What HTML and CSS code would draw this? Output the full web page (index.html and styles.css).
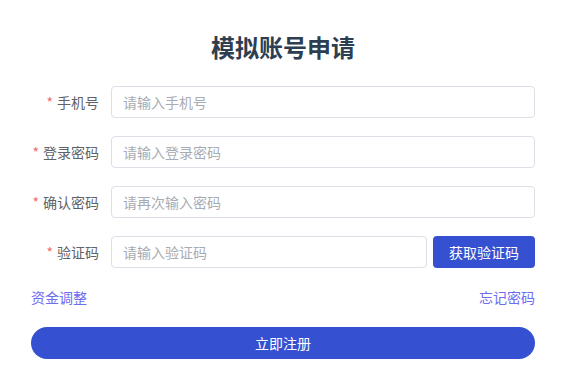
FILE: index.html
```html
<html>
  <head>
    <link rel="stylesheet" href="styles.css">
  </head>
  <body>
    <div class="register">
      <h1 class="title">模拟账号申请</h1>
      <form class="form">
        <div class="form-item">
          <label class="label"><span class="req">*</span>手机号</label>
          <input class="input" type="text" placeholder="请输入手机号">
        </div>
        <div class="form-item">
          <label class="label"><span class="req">*</span>登录密码</label>
          <input class="input" type="password" placeholder="请输入登录密码">
        </div>
        <div class="form-item">
          <label class="label"><span class="req">*</span>确认密码</label>
          <input class="input" type="password" placeholder="请再次输入密码">
        </div>
        <div class="form-item">
          <label class="label"><span class="req">*</span>验证码</label>
          <input class="input" type="text" placeholder="请输入验证码">
          <button class="code-btn" type="button">获取验证码</button>
        </div>
        <div class="links">
          <a class="link" href="#">资金调整</a>
          <a class="link" href="#">忘记密码</a>
        </div>
        <button class="submit" type="button">立即注册</button>
      </form>
    </div>
  </body>
</html>
```

FILE: styles.css
```css
body {
  margin: 0;
  background: #fff;
  font-family: "Noto Sans CJK SC", "Noto Sans", sans-serif;
}

.register {
  width: 504px;
  margin-left: 31px;
}

.title {
  margin: 30px 0 23px;
  font-size: 24px;
  line-height: 33px;
  font-weight: 700;
  text-align: center;
  color: #2c3e50;
}

.form-item {
  display: flex;
  align-items: center;
  height: 32px;
  margin-bottom: 18px;
}

.label {
  width: 80px;
  padding-right: 12px;
  box-sizing: border-box;
  text-align: right;
  font-size: 14px;
  color: #606266;
}

.req {
  color: #f56c6c;
  margin-right: 4px;
}

.input {
  flex: 1;
  min-width: 0;
  height: 32px;
  box-sizing: border-box;
  border: 1px solid #dcdfe6;
  border-radius: 4px;
  padding: 0 11px;
  font-family: inherit;
  font-size: 14px;
  color: #606266;
  outline: none;
}

.input::placeholder {
  color: #a8abb2;
}

.code-btn {
  width: 102px;
  height: 32px;
  margin-left: 6px;
  border: none;
  border-radius: 4px;
  background: #3551d1;
  color: #fff;
  font-family: inherit;
  font-size: 14px;
}

.links {
  display: flex;
  justify-content: space-between;
  line-height: 22px;
  font-size: 14px;
}

.link {
  color: #6e6cf0;
  text-decoration: none;
}

.submit {
  display: block;
  width: 100%;
  height: 32px;
  margin-top: 19px;
  border: none;
  border-radius: 16px;
  background: #3551d1;
  color: #fff;
  font-family: inherit;
  font-size: 14px;
}
```
